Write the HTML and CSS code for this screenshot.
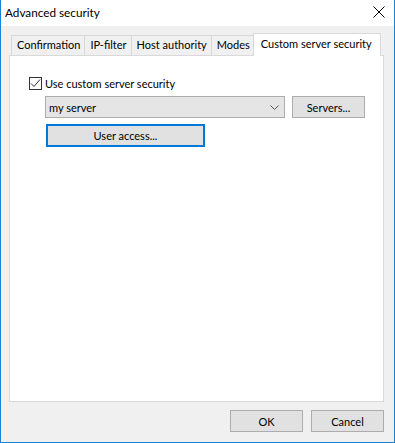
FILE: index.html
```html
<!DOCTYPE html>
<html lang="en">
<head>
    <meta charset="UTF-8">
    <title>Advanced security</title>
    <link rel="stylesheet" href="styles.css">
</head>
<body>
    <div class="window">
        <div class="titlebar">
            <span class="title">Advanced security</span>
            <svg class="close" width="12" height="12" viewBox="0 0 12 12">
                <path d="M0.5 0.5 L11.5 11.5 M11.5 0.5 L0.5 11.5" stroke="#000" stroke-width="1" fill="none"/>
            </svg>
        </div>

        <div class="content">
            <div class="tabs">
                <div class="tab">Confirmation</div>
                <div class="tab">IP-filter</div>
                <div class="tab">Host authority</div>
                <div class="tab">Modes</div>
                <div class="tab active">Custom server security</div>
            </div>

            <div class="panel">
                <label class="check-row">
                    <span class="checkbox">
                        <svg width="11" height="11" viewBox="0 0 11 11">
                            <path d="M1 5.5 L4 8.5 L10 1.5" stroke="#333" stroke-width="1" fill="none"/>
                        </svg>
                    </span>
                    Use custom server security
                </label>

                <div class="server-row">
                    <div class="combo">
                        <span>my server</span>
                        <svg width="9" height="5" viewBox="0 0 9 5">
                            <path d="M0.5 0.5 L4.5 4.5 L8.5 0.5" stroke="#555" stroke-width="1" fill="none"/>
                        </svg>
                    </div>
                    <button class="btn btn-servers">Servers...</button>
                </div>

                <button class="btn btn-access">User access...</button>
            </div>

            <div class="footer">
                <button class="btn">OK</button>
                <button class="btn">Cancel</button>
            </div>
        </div>
    </div>
</body>
</html>
```

FILE: styles.css
```css
* {
    margin: 0;
    padding: 0;
    box-sizing: border-box;
}

body {
    font-family: Lato, "Liberation Sans", sans-serif;
    font-size: 11px;
    color: #000;
    background: #fff;
}

.window {
    width: 395px;
    height: 443px;
    background: #f0f0f0;
    border: 1px solid #1883d7;
    border-top: none;
    display: flex;
    flex-direction: column;
}

/* title bar */
.titlebar {
    height: 26px;
    background: #fff;
    display: flex;
    align-items: center;
    justify-content: space-between;
    padding: 0 9px 2px 4px;
}

.title {
    font-size: 11.75px;
}

.close {
    display: block;
}

/* dialog body */
.content {
    flex: 1;
    display: flex;
    flex-direction: column;
    padding: 7px 10px 0 8px;
}

.tabs {
    display: flex;
    align-items: flex-end;
    height: 22px;
    padding-left: 2px;
}

.tab {
    height: 20px;
    line-height: 18px;
    padding: 0 4px 0 5px;
    border: 1px solid #d9d9d9;
    border-bottom: none;
    margin-right: -1px;
    background: #f0f0f0;
    white-space: nowrap;
}

.tab.active {
    height: 23px;
    line-height: 20px;
    background: #fff;
    margin-left: -1px;
    margin-bottom: -1px;
    padding: 0 8px 0 7px;
    position: relative;
    z-index: 1;
}

.panel {
    height: 347px;
    background: #fff;
    border: 1px solid #d9d9d9;
    padding: 20px 18px 0 19px;
}

.check-row {
    display: flex;
    align-items: center;
    gap: 3px;
    height: 14px;
}

.checkbox {
    width: 13px;
    height: 13px;
    border: 1px solid #333;
    display: flex;
    align-items: center;
    justify-content: center;
}

.checkbox svg {
    display: block;
}

.server-row {
    display: flex;
    gap: 7px;
    margin: 6px 0 6px 16px;
}

.combo {
    width: 240px;
    height: 22px;
    background: #e5e5e5;
    border: 1px solid #adadad;
    display: flex;
    align-items: center;
    justify-content: space-between;
    padding: 0 5px 0 3px;
}

.btn {
    font-family: inherit;
    font-size: 11px;
    color: #000;
    width: 73px;
    height: 22px;
    background: #e1e1e1;
    border: 1px solid #adadad;
}

.btn-access {
    width: 159px;
    height: 23px;
    margin-left: 17px;
    border: 2px solid #0078d7;
}

.footer {
    display: flex;
    justify-content: flex-end;
    gap: 8px;
    margin-top: 8px;
}
```
